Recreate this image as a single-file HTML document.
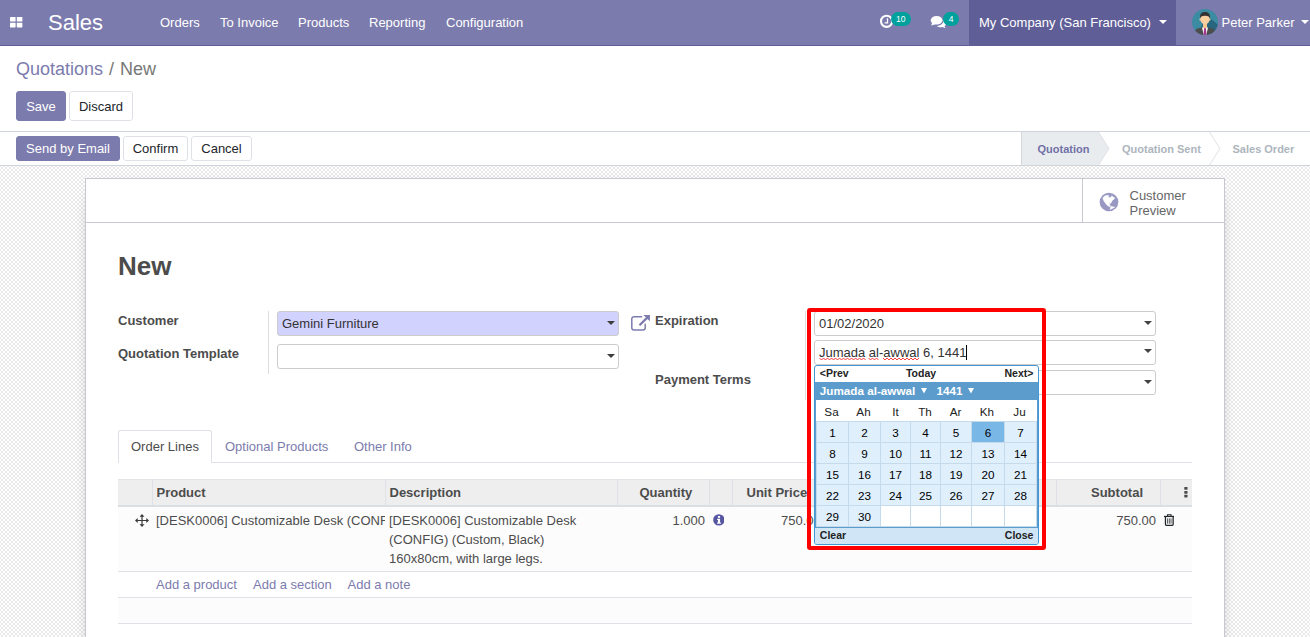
<!DOCTYPE html>
<html>
<head>
<meta charset="utf-8">
<title>Quotations - New</title>
<style>
*{box-sizing:border-box;}
html,body{margin:0;padding:0;}
body{width:1310px;height:637px;overflow:hidden;position:relative;background:#fff;
  font-family:"Liberation Sans",sans-serif;font-size:13px;line-height:1.5;color:#4c4c4c;}
.abs{position:absolute;}
.t{position:absolute;white-space:nowrap;line-height:20px;height:20px;}
a{color:#7c7bad;text-decoration:none;}

/* ---------- navbar ---------- */
#nav{position:absolute;left:0;top:0;width:1310px;height:46px;background:#7c7bad;border-bottom:1px solid #5f5e97;color:#fff;}
#nav .t{color:#fff;line-height:46px;height:46px;top:0;}
#brand{left:48px;font-size:22px;}
#company{position:absolute;left:969px;top:0;width:207px;height:45px;background:#5f5e97;}

.badge{height:14px;border-radius:7px;background:#00a09d;color:#fff;font-size:8.5px;line-height:14px;text-align:center;}
/* ---------- control panel ---------- */
#cp{position:absolute;left:0;top:46px;width:1310px;height:86px;background:#fff;border-bottom:1px solid #ced4da;}
#bc{left:16px;top:10px;font-size:18px;line-height:27px;height:27px;color:#777;}
.btn{position:absolute;border:1px solid #dee2e6;border-radius:3px;background:#fff;color:#212529;text-align:center;white-space:nowrap;}
.btn.pri{background:#7c7bad;border-color:#7c7bad;color:#fff;}

/* ---------- statusbar ---------- */
#sb{position:absolute;left:0;top:132px;width:1310px;height:34px;background:#fff;border-bottom:1px solid #ced4da;}

.sbt{font-size:11px;font-weight:bold;color:#adb5bd;top:1px;line-height:33px;height:33px;}
/* ---------- content bg ---------- */
#bg{position:absolute;left:0;top:166px;width:1310px;height:471px;
  background-color:#fff;
  background-image:conic-gradient(#fff 25%,#eaeaea 0 50%,#fff 0 75%,#eaeaea 0);
  background-size:4px 4px;background-position:1px 1px;}
#sheet{position:absolute;left:85px;top:178px;width:1140px;height:1100px;background:#fff;border:1px solid #c8c8d3;box-shadow:0 5px 20px -15px #000;}

/* ---------- sheet content (absolute page coords) ---------- */
#bbox{position:absolute;left:86px;top:179px;width:1138px;height:44px;border-bottom:1px solid #c8c8d3;}
#cprev{position:absolute;left:1082px;top:179px;width:142px;height:43px;border-left:1px solid #c8c8d3;}
.lbl{font-weight:bold;color:#4c4c4c;}
.inp{position:absolute;height:25px;border:1px solid #ccc;border-radius:3px;background:#fff;}
.inp .v{position:absolute;left:4px;top:0;line-height:23px;white-space:nowrap;color:#333;}
.caret{position:absolute;width:8px;height:4px;}
h1{position:absolute;margin:0;font-size:26px;font-weight:bold;color:#4c4c4c;line-height:32px;white-space:nowrap;}

/* ---------- calendar ---------- */
#cal{position:absolute;left:814px;top:365px;width:225px;height:180px;border:1px solid #4297d7;border-radius:3px;background:#fff;color:#222;font-size:11.700px;overflow:hidden;}
#cal .c{position:absolute;background:#dfeffc;color:#000;text-align:center;height:20px;line-height:20px;padding-top:1px;font-size:11.700px;}
#cal .c.e{background:#fff;}
#cal .c.h{background:#79b7e7;}
#cal .w{position:absolute;text-align:center;top:36.200px;height:20px;line-height:20px;color:#222;}
#cal .n{position:absolute;font-weight:bold;font-size:10.500px;line-height:16px;height:16px;color:#222;white-space:nowrap;}
#redbox{position:absolute;left:807px;top:308px;width:239px;height:242px;border:4px solid #f00;border-radius:3px;}

/* ---------- notebook / table ---------- */
#tabline{position:absolute;left:118px;top:462px;width:1074px;height:1px;background:#dee2e6;}
#tab1{position:absolute;left:118px;top:430px;width:94px;height:33px;border:1px solid #dee2e6;border-bottom:0;border-radius:3px 3px 0 0;background:#fff;}
#thead{position:absolute;left:118px;top:479px;width:1074px;height:28px;background:#eee;border-top:1px solid #e2e5e8;border-bottom:2px solid #dadfe3;}
.th{position:absolute;top:480px;height:26px;line-height:26px;font-weight:bold;color:#4c4c4c;white-space:nowrap;}
.vs{position:absolute;top:479px;width:1px;height:26px;background:#dee2e6;}
#row1{position:absolute;left:118px;top:507px;width:1074px;height:64px;background:#fcfcfc;}
.hl{position:absolute;left:118px;width:1074px;height:1px;background:#dee2e6;}
.td{position:absolute;line-height:19px;white-space:nowrap;color:#4c4c4c;}
</style>
</head>
<body>

<!-- NAVBAR -->
<div id="nav">
  <svg class="abs" style="left:9.6px;top:16.6px" width="13" height="11" viewBox="0 0 13 11"><g fill="#fff"><rect x="0" y="0" width="5.6" height="4.6" rx=".6"/><rect x="6.8" y="0" width="5.6" height="4.6" rx=".6"/><rect x="0" y="5.8" width="5.6" height="4.6" rx=".6"/><rect x="6.8" y="5.8" width="5.6" height="4.6" rx=".6"/></g></svg>
  <div class="t" id="brand">Sales</div>
  <div class="t" style="left:160px">Orders</div>
  <div class="t" style="left:220px">To Invoice</div>
  <div class="t" style="left:298px">Products</div>
  <div class="t" style="left:369px">Reporting</div>
  <div class="t" style="left:446px">Configuration</div>

  <!-- clock icon -->
  <svg class="abs" style="left:879px;top:14px" width="16" height="15" viewBox="0 0 16 15"><circle cx="7.6" cy="7.3" r="5.6" fill="none" stroke="#fff" stroke-width="2.1"/><path d="M8.5 4.2v4.6H5.6" fill="none" stroke="#fff" stroke-width="1.3"/></svg>
  <div class="abs badge" style="left:890.5px;top:12px;width:20.5px">10</div>
  <!-- comments icon -->
  <svg class="abs" style="left:930px;top:15px" width="17" height="14" viewBox="0 0 17 14"><g fill="#fff"><ellipse cx="6.6" cy="5.2" rx="5.9" ry="4.3"/><path d="M2.2 7.2 L1.2 10.6 L5.6 9.2z"/><path d="M13.4 5.4c1.6.7 2.6 1.9 2.6 3.3 0 1-.6 1.9-1.500 2.600l.9 2-3-1.200c-.5.100-1 .2-1.600.2-1.600 0-3-.5-4-1.300 3.700-.1 6.700-2.400 6.700-5.200 0-.1 0-.3-.1-.4z"/></g></svg>
  <div class="abs badge" style="left:943.3px;top:12px;width:15.8px">4</div>
  <div id="company"></div>
  <div class="t" style="left:979px">My Company (San Francisco)</div>
  <svg class="abs" style="left:1158.5px;top:20.4px" width="8" height="4" viewBox="0 0 8 4"><path d="M0 0h8L4 4z" fill="#fff"/></svg>
  <!-- avatar -->
  <svg class="abs" style="left:1192px;top:9px;border-radius:50%;overflow:hidden" width="26" height="26" viewBox="0 0 26 26">
    <g>
      <rect width="26" height="26" fill="#3b8ba3"/>
      <path d="M13 5 L30 19 L30 30 L6 30z" fill="#27667d"/>
      <g transform="translate(13 25.3) scale(1.120 1.020) translate(-13 -26)">
      <path d="M3 29 V26 C3 21.500 6 20 9.500 19.500 L16.500 19.500 C20 20 23 21.500 23 26 V29z" fill="#4d4d4d"/>
      <path d="M10.300 19.300 L15.700 19.300 L14.300 26 V29 H11.700 V26z" fill="#fff"/>
      <path d="M12.200 19.800 L13.800 19.800 L14.300 26 V29 H11.700 V26z" fill="#a3378f"/>
      <rect x="11.200" y="14" width="3.600" height="6" fill="#f5c592"/>
      <ellipse cx="13" cy="11" rx="4.200" ry="5.200" fill="#fad0a1"/>
      <ellipse cx="8.700" cy="11.600" rx=".7" ry="1.100" fill="#fad0a1"/><ellipse cx="17.300" cy="11.600" rx=".7" ry="1.100" fill="#fad0a1"/>
      <path d="M8.600 10.500 C8.100 5.500 10.500 4.200 13 4.200 C15.500 4.200 17.900 5.500 17.400 10.500 C17 8.500 16 7.700 13 7.700 C10 7.700 9 8.500 8.600 10.500z" fill="#333"/>
      </g>
    </g>
  </svg>
  <div class="t" style="left:1221.500px">Peter Parker</div>
  <svg class="abs" style="left:1301px;top:20.4px" width="8" height="4" viewBox="0 0 8 4"><path d="M0 0h8L4 4z" fill="#fff"/></svg>
</div>

<!-- CONTROL PANEL -->
<div id="cp">
  <div class="t" id="bc"><span style="color:#7c7bad">Quotations</span><span style="padding:0 6px 0 6px">/</span>New</div>
  <div class="btn pri" style="left:16px;top:45px;width:50px;height:30px;line-height:30px">Save</div>
  <div class="btn" style="left:69px;top:45px;width:64px;height:30px;line-height:30px">Discard</div>
</div>

<!-- STATUSBAR -->
<div id="sb">
  <div class="btn pri" style="left:16px;top:4px;width:104px;height:25px;line-height:23px">Send by Email</div>
  <div class="btn" style="left:123px;top:4px;width:65px;height:25px;line-height:23px">Confirm</div>
  <div class="btn" style="left:191px;top:4px;width:61px;height:25px;line-height:23px">Cancel</div>
  <svg class="abs" style="left:1015px;top:0" width="295" height="33" viewBox="0 0 295 33">
    <path d="M6.500 0 H83.500 L94 16.500 L83.500 33 H6.500z" fill="#e9ecef"/>
    <path d="M6.500 0 V33" stroke="#d5d9de" stroke-width="1" fill="none"/>
    <path d="M83.500 0 L94 16.500 L83.500 33" stroke="#dee2e6" stroke-width="1" fill="none"/>
    <path d="M194.500 0 L205 16.500 L194.500 33" stroke="#dee2e6" stroke-width="1" fill="none"/>
  </svg>
  <div class="t sbt" style="left:1037.500px;color:#7170a7">Quotation</div>
  <div class="t sbt" style="left:1122px">Quotation Sent</div>
  <div class="t sbt" style="left:1232.500px">Sales Order</div>
</div>

<!-- CONTENT -->
<div id="bg"></div>
<div id="sheet"></div>

<div id="bbox"></div>
<div id="cprev">
  <svg class="abs" style="left:15.850px;top:13.200px" width="20" height="20" viewBox="0 0 20 20">
    <circle cx="10" cy="10" r="9.350" fill="#9998c3"/>
    <path d="M4.170 5.400 L6.300 3.800 L9.500 3.300 L9 4.900 L11.600 5.700 L12.750 3.900 L15.830 6.150 L12.750 9 L11.870 11.200 L10.100 10.800 L10.990 13.400 L10.550 14.700 L7.900 12.970 L5.270 9.450 L3.950 6.800 Z" fill="#fff" stroke="#fff" stroke-width=".6" stroke-linejoin="round"/>
    <path d="M11.650 14.290 L15.830 15.170 L11.200 17.600 Z" fill="#fff" stroke="#fff" stroke-width=".4" stroke-linejoin="round"/>
  </svg>
  <div class="t" style="left:46.500px;top:9.300px;line-height:15px;height:30px;color:#666;white-space:normal;width:80px">Customer Preview</div>
</div>

<h1 style="left:118px;top:250px">New</h1>

<!-- left group -->
<div class="t lbl" style="left:118px;top:311px">Customer</div>
<div class="t lbl" style="left:118px;top:344px">Quotation Template</div>
<div class="abs" style="left:268px;top:311px;width:1px;height:63px;background:#ddd"></div>
<div class="inp" style="left:277px;top:311px;width:342px;background:#d2d2ff"><span class="v">Gemini Furniture</span>
  <svg class="caret" style="left:329px;top:9.300px" viewBox="0 0 8 4"><path d="M0 0h8L4 4z" fill="#3d3d3d"/></svg></div>
<div class="inp" style="left:277px;top:344px;width:342px">
  <svg class="caret" style="left:329px;top:9.300px" viewBox="0 0 8 4"><path d="M0 0h8L4 4z" fill="#3d3d3d"/></svg></div>
<!-- external link icon -->
<svg class="abs" style="left:631px;top:314px" width="20" height="17" viewBox="0 0 20 17">
  <path d="M14.200 10.200 V13.800 A2.300 2.300 0 0 1 11.900 16.100 H3.100 A2.300 2.300 0 0 1 .800 13.800 V4.960 A2.300 2.300 0 0 1 3.100 2.660 H10.600" fill="none" stroke="#7c7bad" stroke-width="1.500" stroke-linecap="round"/>
  <path d="M12.300 .900 H18.900 V7.300 L16.500 4.900 L9.300 12.100 L7.700 10.500 L14.900 3.300 Z" fill="#7c7bad"/>
</svg>

<!-- right group -->
<div class="t lbl" style="left:655px;top:311px">Expiration</div>
<div class="t lbl" style="left:655px;top:370px">Payment Terms</div>
<div class="abs" style="left:805px;top:311px;width:1px;height:89px;background:#ddd"></div>
<div class="inp" style="left:814px;top:311px;width:342px"><span class="v">01/02/2020</span>
  <svg class="caret" style="left:329px;top:9.300px" viewBox="0 0 8 4"><path d="M0 0h8L4 4z" fill="#444"/></svg></div>
<div class="inp" style="left:814px;top:340px;width:342px"><span class="v">Jumada al-awwal 6, 1441</span>
  <svg class="caret" style="left:329px;top:8.300px" viewBox="0 0 8 4"><path d="M0 0h8L4 4z" fill="#444"/></svg></div>
<div class="inp" style="left:814px;top:370px;width:342px">
  <svg class="caret" style="left:329px;top:9.300px" viewBox="0 0 8 4"><path d="M0 0h8L4 4z" fill="#444"/></svg></div>



<!-- notebook -->
<div id="tabline"></div>
<div id="tab1"></div>
<div class="t" style="left:131px;top:437px;color:#4c4c4c">Order Lines</div>
<div class="t" style="left:225px;top:437px;color:#7c7bad">Optional Products</div>
<div class="t" style="left:354px;top:437px;color:#7c7bad">Other Info</div>

<div id="thead"></div>
<div class="vs" style="left:152px"></div>
<div class="vs" style="left:385px"></div>
<div class="vs" style="left:617px"></div>
<div class="vs" style="left:709px"></div>
<div class="vs" style="left:732px"></div>
<div class="vs" style="left:1056px"></div>
<div class="vs" style="left:1160px"></div>
<div class="th" style="left:156.500px">Product</div>
<div class="th" style="left:389.500px">Description</div>
<div class="th" style="left:639.500px">Quantity</div>
<div class="th" style="left:746.500px">Unit Price</div>
<div class="th" style="left:1091px">Subtotal</div>
<svg class="abs" style="left:1183.800px;top:487.400px" width="4" height="11" viewBox="0 0 4 11"><g fill="#4c4c4c"><rect x=".3" y="0" width="3.200" height="2.800" rx=".5"/><rect x=".3" y="3.900" width="3.200" height="2.800" rx=".5"/><rect x=".3" y="7.800" width="3.200" height="2.800" rx=".5"/></g></svg>

<div id="row1"></div>
<!-- move handle -->
<svg class="abs" style="left:135.100px;top:514.100px" width="14" height="13" viewBox="0 0 14 13"><path fill="#3a3a3a" d="M7 0 L9.450 2.700 H7.600 V5.900 H11.300 V4.050 L14 6.500 L11.300 8.950 V7.100 H7.600 V10.300 H9.450 L7 13 L4.550 10.300 H6.400 V7.100 H2.700 V8.950 L0 6.500 L2.700 4.050 V5.900 H6.400 V2.700 H4.550 Z"/></svg>
<div class="td" style="left:156px;top:511px;width:229px;overflow:hidden">[DESK0006] Customizable Desk (CONFIG) (Custom, Black)</div>
<div class="td" style="left:389px;top:511px">[DESK0006] Customizable Desk<br>(CONFIG) (Custom, Black)<br>160x80cm, with large legs.</div>
<div class="td" style="left:640px;top:511px;width:65px;text-align:right">1.000</div>
<!-- info icon -->
<svg class="abs" style="left:712.500px;top:514.300px" width="11.800" height="11.800" viewBox="0 0 12 12"><circle cx="6" cy="6" r="5.800" fill="#5655a2"/><rect x="5" y="2" width="2.200" height="1.900" fill="#fff"/><path d="M4.200 4.900 H7.200 V8.600 H8 V9.800 H4.200 V8.600 H5 V6.100 H4.200 Z" fill="#fff"/></svg>
<div class="td" style="left:781px;top:511px">750.00</div>
<div class="td" style="left:1090px;top:511px;width:66px;text-align:right">750.00</div>
<!-- trash -->
<svg class="abs" style="left:1163.700px;top:514.300px" width="10.600" height="12" viewBox="0 0 11 12.400"><g fill="none" stroke="#212529"><path d="M0 2.500 H11" stroke-width="1.300"/><path d="M3.700 2.200 V.700 H7.300 V2.200" stroke-width="1.100"/><path d="M1.500 3 V10.700 Q1.500 11.700 2.500 11.700 H8.500 Q9.500 11.700 9.500 10.700 V3" stroke-width="1.300"/><path d="M3.700 4.500 V10 M5.500 4.500 V10 M7.300 4.500 V10" stroke-width=".8"/></g></svg>
<div class="hl" style="top:571px"></div>
<div class="t" style="left:156px;top:575px;color:#7c7bad">Add a product</div>
<div class="t" style="left:253px;top:575px;color:#7c7bad">Add a section</div>
<div class="t" style="left:347.500px;top:575px;color:#7c7bad">Add a note</div>
<div class="hl" style="top:597px"></div>
<div class="abs" style="left:118px;top:598px;width:1074px;height:25px;background:#fcfcfc"></div>
<div class="hl" style="top:623px"></div>
<div id="cal">
<div class="n" style="left:4.800px;top:-1px">&lt;Prev</div>
<div class="n" style="left:76px;top:-1px;width:60px;text-align:center">Today</div>
<div class="n" style="right:4.600px;top:-1px">Next&gt;</div>
<div class="abs" style="left:0;top:16px;width:223px;height:146px;border:1px solid #5c9ccc;border-top:0"></div>
<div class="abs" style="left:0;top:16px;width:223px;height:18px;background:#5c9ccc"></div>
<div class="abs" style="left:4.800px;top:16px;height:18px;line-height:18px;font-weight:bold;color:#fff;white-space:nowrap;font-size:11.700px">Jumada al-awwal</div>
<div class="abs" style="left:121.500px;top:16px;height:18px;line-height:18px;font-weight:bold;color:#fff;white-space:nowrap;font-size:11.700px">1441</div>
<svg class="abs" style="left:106px;top:22px" width="6" height="6" viewBox="0 0 6 6"><path d="M0 0h6L3 5.600z" fill="#fff"/></svg>
<svg class="abs" style="left:153px;top:22px" width="6" height="6" viewBox="0 0 6 6"><path d="M0 0h6L3 5.600z" fill="#fff"/></svg>
<div class="abs" style="left:1px;top:55px;width:221px;height:106px;background:#c5dbec"></div>
<div class="w" style="left:0px;width:33px">Sa</div>
<div class="w" style="left:32px;width:33px">Ah</div>
<div class="w" style="left:65px;width:31px">It</div>
<div class="w" style="left:94.5px;width:31px">Th</div>
<div class="w" style="left:124.5px;width:32px">Ar</div>
<div class="w" style="left:154.8px;width:34px">Kh</div>
<div class="w" style="left:188px;width:33px">Ju</div>
<div class="c" style="left:2px;top:56px;width:31px">1</div>
<div class="c" style="left:34px;top:56px;width:31px">2</div>
<div class="c" style="left:66px;top:56px;width:29px">3</div>
<div class="c" style="left:96px;top:56px;width:29px">4</div>
<div class="c" style="left:126px;top:56px;width:30px">5</div>
<div class="c h" style="left:157px;top:56px;width:32px">6</div>
<div class="c" style="left:190px;top:56px;width:31px">7</div>
<div class="c" style="left:2px;top:77px;width:31px">8</div>
<div class="c" style="left:34px;top:77px;width:31px">9</div>
<div class="c" style="left:66px;top:77px;width:29px">10</div>
<div class="c" style="left:96px;top:77px;width:29px">11</div>
<div class="c" style="left:126px;top:77px;width:30px">12</div>
<div class="c" style="left:157px;top:77px;width:32px">13</div>
<div class="c" style="left:190px;top:77px;width:31px">14</div>
<div class="c" style="left:2px;top:98px;width:31px">15</div>
<div class="c" style="left:34px;top:98px;width:31px">16</div>
<div class="c" style="left:66px;top:98px;width:29px">17</div>
<div class="c" style="left:96px;top:98px;width:29px">18</div>
<div class="c" style="left:126px;top:98px;width:30px">19</div>
<div class="c" style="left:157px;top:98px;width:32px">20</div>
<div class="c" style="left:190px;top:98px;width:31px">21</div>
<div class="c" style="left:2px;top:119px;width:31px">22</div>
<div class="c" style="left:34px;top:119px;width:31px">23</div>
<div class="c" style="left:66px;top:119px;width:29px">24</div>
<div class="c" style="left:96px;top:119px;width:29px">25</div>
<div class="c" style="left:126px;top:119px;width:30px">26</div>
<div class="c" style="left:157px;top:119px;width:32px">27</div>
<div class="c" style="left:190px;top:119px;width:31px">28</div>
<div class="c" style="left:2px;top:140px;width:31px">29</div>
<div class="c" style="left:34px;top:140px;width:31px">30</div>
<div class="c e" style="left:66px;top:140px;width:29px"></div>
<div class="c e" style="left:96px;top:140px;width:29px"></div>
<div class="c e" style="left:126px;top:140px;width:30px"></div>
<div class="c e" style="left:157px;top:140px;width:32px"></div>
<div class="c e" style="left:190px;top:140px;width:31px"></div>
<div class="abs" style="left:0;top:162px;width:223px;height:17px;background:#d0e5f5"></div>
<div class="n" style="left:4.800px;top:160.500px">Clear</div>
<div class="n" style="right:4.600px;top:160.500px">Close</div>
</div>
<svg class="abs" style="left:0;top:0" width="1310" height="637"><polyline points="819.5,358 821.5,360 823.5,358 825.5,360 827.5,358 829.5,360 831.5,358 833.5,360 835.5,358 837.5,360 839.5,358 841.5,360 843.5,358 845.5,360 847.5,358 849.5,360 851.5,358 853.5,360 855.5,358 857.5,360 859.5,358 861.5,360 863.5,358 865.5,360" fill="none" stroke="#f00" stroke-width="1" opacity=".75"/><polyline points="868.5,358 870.5,360 872.5,358 874.5,360 876.5,358 878.5,360" fill="none" stroke="#f00" stroke-width="1" opacity=".75"/><polyline points="883,358 885,360 887,358 889,360 891,358 893,360 895,358 897,360 899,358 901,360 903,358 905,360 907,358 909,360 911,358 913,360 915,358 917,360 919,358" fill="none" stroke="#f00" stroke-width="1" opacity=".75"/></svg>
<div class="abs" style="left:966px;top:345px;width:1px;height:15px;background:#000"></div>
<div id="redbox"></div>
</body>
</html>
